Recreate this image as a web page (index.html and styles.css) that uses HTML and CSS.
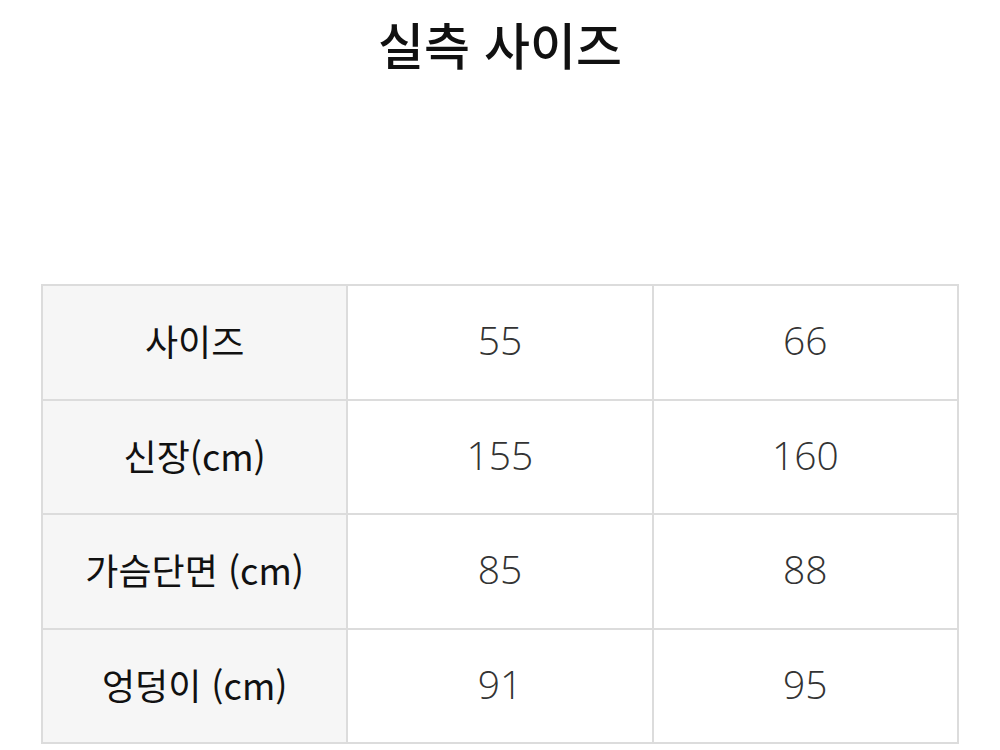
FILE: index.html
```html
<!DOCTYPE html>
<html lang="ko">
<head>
<meta charset="utf-8">
<link rel="stylesheet" href="styles.css">
</head>
<body>
<div class="page">
  <h1 class="title">실측 사이즈</h1>
  <table class="size-table">
    <tr><th>사이즈</th><td>55</td><td>66</td></tr>
    <tr><th>신장(cm)</th><td>155</td><td>160</td></tr>
    <tr><th>가슴단면 (cm)</th><td>85</td><td>88</td></tr>
    <tr><th>엉덩이 (cm)</th><td>91</td><td>95</td></tr>
  </table>
</div>
</body>
</html>
```
FILE: styles.css
```css
html, body {
  margin: 0;
  padding: 0;
  background: #fff;
}
.page {
  width: 1000px;
  height: 750px;
  overflow: hidden;
  font-family: "Noto Sans CJK KR", "Noto Sans", sans-serif;
}
.title {
  margin: 0;
  padding-top: 8px;
  height: 284px;
  box-sizing: border-box;
  text-align: center;
  font-size: 50px;
  font-weight: 500;
  line-height: 70px;
  color: #111;
}
.size-table {
  margin: 0 0 0 41px;
  width: 918px;
  border-collapse: collapse;
  table-layout: fixed;
}
.size-table th,
.size-table td {
  border: 2px solid #dcdcdc;
  height: 108.5px;
  padding: 0 0 4px;
  text-align: center;
  vertical-align: middle;
  font-size: 36px;
  line-height: 40px;
}
.size-table th {
  background: #f6f6f6;
  color: #111;
  font-weight: 400;
}
.size-table td {
  color: #333;
  font-family: "Open Sans", "Noto Sans", sans-serif;
  font-weight: 300;
  font-size: 39px;
}
```
